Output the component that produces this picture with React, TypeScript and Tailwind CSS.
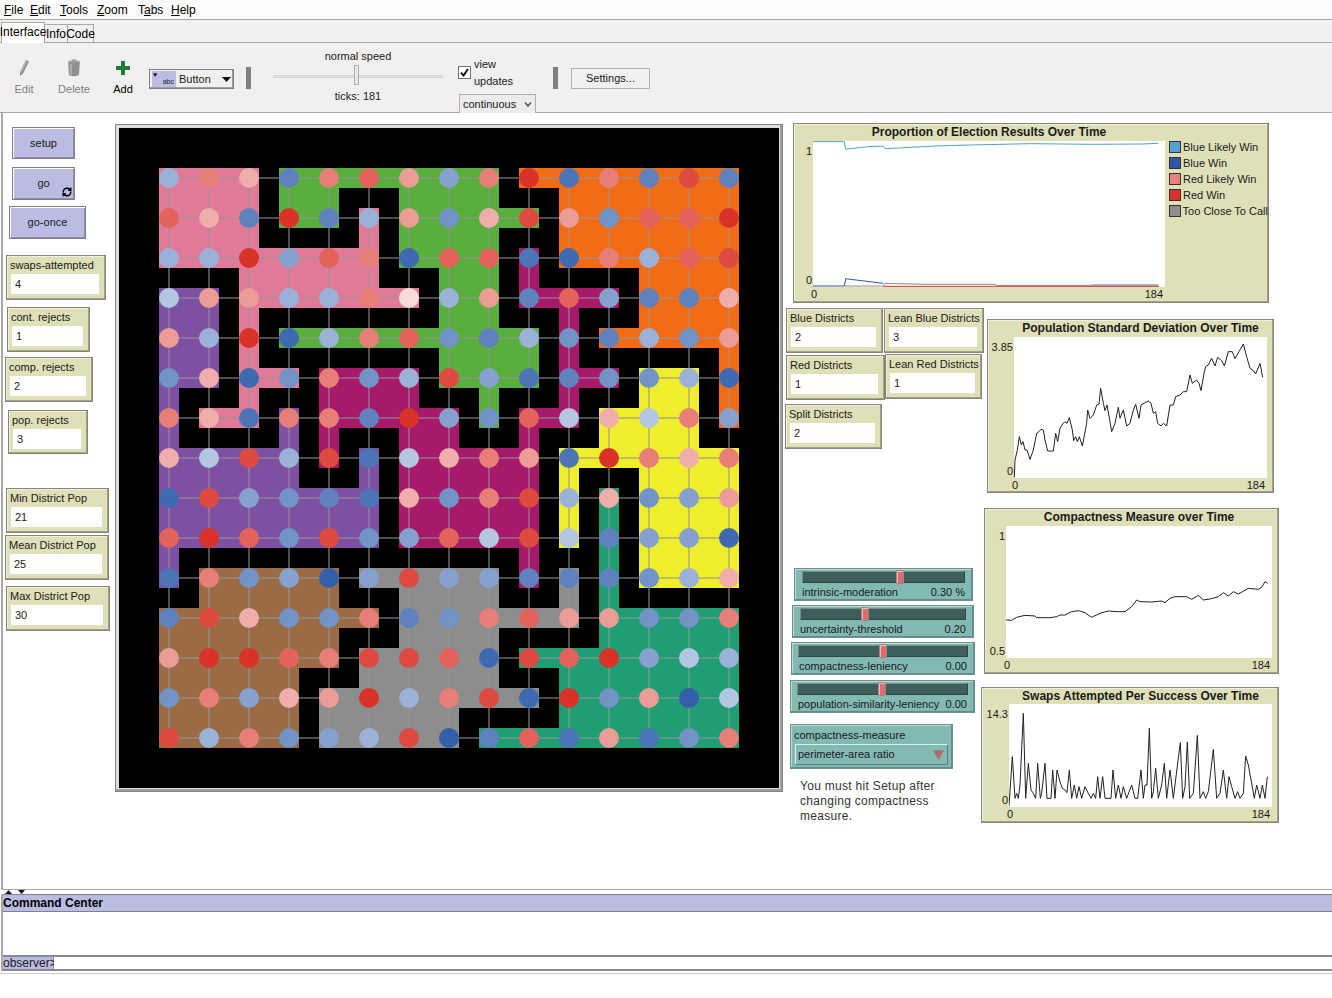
import React from 'react';
import { RefreshCw } from 'lucide-react';

// district of each node, row by row
const districts = [
  'PPPGGGGGGOOOOOO',
  'PPPGGPGGGGOOOOO',
  'PPPPPPGGGMOOOOO',
  'UUPPPPPGGMMMOOO',
  'UUPGGGGGGGMOOOO',
  'UUPPMMMGGGMMYYO',
  'UPPUMMMMGMMYYYO',
  'UUUUMUMMMMYYYYY',
  'UUUUUUMMMMYTYYY',
  'UUUUUUMMMMYTYYY',
  'UBBBBAAAAMATYYY',
  'BBBBBBAAAAATTTT',
  'BBBBBAAAATTTTTT',
  'BBBBAAAAAATTTTT',
  'BBBBAAAATTTTTTT',
];

// voter shade of each node: a-g red (dark to pale), 0-7 blue (dark to pale)
const voters = [
  '6df3dce5da2d3b3',
  'cf3a36e4fbe4cca',
  '66a5cd1cc21d6cb',
  '7ee66dg6e3c533f',
  'e6a16dc4364364e',
  '4f14d46b5234461',
  'df2dd3a54c7f7d5',
  'f7b6b27fde2adfd',
  '1b5432f4db6f45e',
  'cac4b45c7b73551',
  '2d4505b5533346f',
  '3bf44d34dcee44d',
  'eaacdbbc1bca576',
  '4d5fea6db1a4e07',
  'b6d456b03c2e24d',
];

const districtColors: Record<string, string> = {
  P: '#df7b98',
  G: '#59ae3d',
  O: '#f26b16',
  U: '#7d50a2',
  M: '#a61a69',
  Y: '#eeee2c',
  B: '#9a6b45',
  A: '#8d8d8d',
  T: '#1f9e75',
};

const voterColors: Record<string, string> = {
  a: '#d93329',
  b: '#de4a40',
  c: '#e3635c',
  d: '#e87e78',
  e: '#ec9c97',
  f: '#efaeab',
  g: '#f6dbd9',
  '0': '#345fab',
  '1': '#3f69b0',
  '2': '#4d74b6',
  '3': '#5f81bd',
  '4': '#7293c6',
  '5': '#86a1ce',
  '6': '#9bb1d7',
  '7': '#b4c6e2',
};

const popLine =
  '688,1072 690,1020 697,990 703,950 709,975 714,965 720,990 726,990 735,1018 745,990 755,940 762,935 768,928 775,930 780,960 788,993 805,993 812,940 818,965 825,925 833,912 840,905 846,910 853,893 862,930 866,962 872,950 877,965 883,950 892,978 905,910 908,870 915,895 925,885 935,855 942,852 947,805 955,850 960,872 966,855 975,905 980,935 990,910 1000,862 1005,895 1015,870 1025,918 1035,910 1045,870 1052,853 1062,895 1068,855 1080,848 1090,843 1098,850 1105,880 1112,875 1118,910 1128,918 1135,910 1145,918 1155,855 1165,855 1172,830 1185,825 1195,815 1205,815 1215,765 1222,790 1235,780 1242,790 1248,812 1258,755 1262,740 1270,735 1280,715 1290,738 1298,712 1310,722 1318,738 1330,695 1342,695 1350,716 1362,695 1375,672 1385,710 1395,745 1405,752 1412,762 1425,730 1433,772';

const compactLine =
  '663,360 680,361 695,352 720,346 750,348 755,353 795,353 815,350 825,345 840,345 860,335 880,332 900,338 920,352 945,340 970,333 1000,335 1020,335 1040,320 1055,300 1065,305 1100,306 1130,303 1140,308 1155,295 1170,290 1205,290 1220,298 1240,286 1255,300 1280,296 1300,290 1315,278 1330,288 1345,275 1360,282 1390,265 1420,268 1430,262 1440,245 1448,250';

const swapsLine =
  '672,918 682,770 690,895 695,880 700,895 705,855 715,640 722,895 730,790 738,870 745,880 752,895 758,790 766,895 770,880 780,790 786,895 798,895 803,810 810,895 816,810 825,845 832,865 840,870 846,878 853,810 860,895 868,855 875,895 882,860 890,895 900,860 910,880 918,895 925,880 932,895 938,830 945,895 953,830 960,895 978,895 984,810 992,895 1000,855 1008,895 1015,860 1025,895 1040,855 1050,895 1058,895 1068,810 1075,895 1080,855 1086,855 1093,685 1100,895 1105,875 1112,805 1120,895 1130,855 1138,790 1145,895 1155,810 1165,895 1178,790 1186,728 1193,895 1200,860 1207,726 1214,895 1225,880 1237,706 1245,895 1255,875 1262,895 1270,875 1285,748 1295,895 1305,880 1315,810 1325,895 1332,830 1340,860 1350,895 1358,875 1365,895 1375,880 1382,768 1390,795 1400,850 1408,895 1415,855 1425,895 1432,855 1440,895 1447,830';

const legend = [
  { label: 'Blue Likely Win', color: 'bg-[#52a2cf]' },
  { label: 'Blue Win', color: 'bg-[#2f57a6]' },
  { label: 'Red Likely Win', color: 'bg-[#e88080]' },
  { label: 'Red Win', color: 'bg-[#d9302a]' },
  { label: 'Too Close To Call', color: 'bg-[#8d8d8d]' },
];

const WorldMap = () => {
  const cells: React.ReactNode[] = [];
  const links: React.ReactNode[] = [];
  const dots: React.ReactNode[] = [];
  for (let j = 0; j < 15; j++) {
    for (let i = 0; i < 15; i++) {
      const d = districts[j][i];
      const fill = districtColors[d];
      const x = 40 + 40 * i;
      const y = 40 + 40 * j;
      const right = i < 14 && districts[j][i + 1] === d;
      const down = j < 14 && districts[j + 1][i] === d;
      const corner = right && down && districts[j + 1][i + 1] === d;
      cells.push(<rect key={`n${i}-${j}`} x={x} y={y} width={20} height={20} fill={fill} />);
      if (right) cells.push(<rect key={`r${i}-${j}`} x={x + 20} y={y} width={20} height={20} fill={fill} />);
      if (down) cells.push(<rect key={`d${i}-${j}`} x={x} y={y + 20} width={20} height={20} fill={fill} />);
      if (corner) cells.push(<rect key={`c${i}-${j}`} x={x + 20} y={y + 20} width={20} height={20} fill={fill} />);
      if (i < 14) links.push(<line key={`h${i}-${j}`} x1={x + 10} y1={y + 10} x2={x + 50} y2={y + 10} />);
      if (j < 14) links.push(<line key={`v${i}-${j}`} x1={x + 10} y1={y + 10} x2={x + 10} y2={y + 50} />);
      dots.push(<circle key={`p${i}-${j}`} cx={x + 10} cy={y + 10} r={10} fill={voterColors[voters[j][i]]} />);
    }
  }
  return (
    <svg width={660} height={660} viewBox="0 0 660 660" className="block bg-black">
      <g shapeRendering="crispEdges">{cells}</g>
      <g stroke="#939393" strokeOpacity={0.52} strokeWidth={2}>
        {links}
      </g>
      {dots}
    </svg>
  );
};

const Monitor = ({ label, value, className }: { label: string; value: string; className: string }) => (
  <div
    className={`absolute flex flex-col border border-[#85857a] bg-[#dfdfb8] pl-[4px] pr-[6px] shadow-[inset_-1px_-1px_0_#a3a38c,inset_1px_1px_0_#f0f0dc] ${className}`}
  >
    <div className="h-[18px] leading-[19px] whitespace-nowrap -ml-[1px]">{label}</div>
    <div className="h-[20px] bg-white pl-[4px] leading-[20px]">{value}</div>
  </div>
);

const NlButton = ({ label, className, forever }: { label: string; className: string; forever?: boolean }) => (
  <div
    className={`absolute flex items-center justify-center border border-[#7e7e86] bg-[#babce2] shadow-[inset_1px_1px_0_#ffffff,inset_-1px_-1px_0_#8e8fb0] ${className}`}
  >
    {label}
    {forever && (
      <RefreshCw size={10} strokeWidth={3.5} color="#000" className="absolute right-[2px] bottom-[2px]" />
    )}
  </div>
);

const Slider = ({
  label,
  value,
  className,
  knob,
  track,
}: {
  label: string;
  value: string;
  className: string;
  knob: string;
  track: string;
}) => (
  <div
    className={`absolute flex flex-col border border-[#6f8f8b] bg-[#82b9b2] shadow-[inset_-1px_-1px_0_#5f8f8a,inset_1px_1px_0_#b9dcd7] ${className}`}
  >
    <div className={`relative mt-[2px] h-[12px] border border-t-[#7a8f8c] border-l-[#7a8f8c] border-r-[#2c4744] border-b-[#2c4744] bg-[#3f5f5c] ${track}`}>
      <div className={`absolute -top-[2px] h-[14px] w-[8px] rounded-[1px] border border-[#a5807f] bg-[#d86f6f] shadow-[inset_1px_1px_0_#f4b9b8] ${knob}`} />
    </div>
    <div className="flex justify-between whitespace-nowrap leading-[16px] mt-[1px] pl-[7px] pr-[7px]">
      <span>{label}</span>
      <span>{value}</span>
    </div>
  </div>
);

const Plot = ({
  title,
  className,
  yMax,
  yMin,
  xPad,
  width,
  height,
  viewBox,
  children,
  side,
}: {
  title: string;
  className: string;
  yMax: string;
  yMin: string;
  xPad: string;
  width: number;
  height: number;
  viewBox: string;
  children: React.ReactNode;
  side?: React.ReactNode;
}) => (
  <div
    className={`absolute grid border border-[#85857a] bg-[#dfdfb8] shadow-[inset_-1px_-1px_0_#a3a38c,inset_1px_1px_0_#f0f0dc] ${className}`}
  >
    <div />
    <div className="text-center font-bold text-[12px] leading-[17px] whitespace-nowrap">{title}</div>
    <div />
    <div className="flex flex-col justify-between items-end pt-[3px] pr-[1px] leading-[14px]">
      <span>{yMax}</span>
      <span>{yMin}</span>
    </div>
    <svg width={width} height={height} viewBox={viewBox} className="block bg-white" fill="none">
      {children}
    </svg>
    <div>{side}</div>
    <div className={`col-span-3 flex justify-between leading-[15px] ${xPad}`}>
      <span>0</span>
      <span>184</span>
    </div>
  </div>
);

const Toolbtn = ({ label, muted, children, className }: { label: string; muted?: boolean; children: React.ReactNode; className: string }) => (
  <div className={`flex flex-col items-center ${className}`}>
    <div className="h-[20px] flex items-center justify-center">{children}</div>
    <div className={`mt-[3px] ${muted ? 'text-[#808080]' : 'text-black'}`}>{label}</div>
  </div>
);

export default function App() {
  return (
    <div className="relative flex h-[998px] w-[1332px] flex-col overflow-hidden bg-white font-['Liberation_Sans',sans-serif] text-[11px] text-[#1a1a1a]">
      {/* menu bar */}
      <div className="flex h-[20px] items-center border-b border-[#a8a8a8] bg-[#fbfbfb] pl-[4px] text-[12px] text-black">
        <span className="w-[26px]"><u>F</u>ile</span>
        <span className="w-[30px]"><u>E</u>dit</span>
        <span className="w-[37px]"><u>T</u>ools</span>
        <span className="w-[41px]"><u>Z</u>oom</span>
        <span className="w-[33px]">T<u>a</u>bs</span>
        <span><u>H</u>elp</span>
      </div>

      {/* tabs */}
      <div className="relative flex h-[23px] items-end border-b border-[#a8a8a8] bg-[#f0f0f0] pl-[1px] text-[12px] text-black">
        <div className="relative -mb-px flex h-[21px] w-[44px] items-center justify-center border border-b-0 border-[#a8a8a8] bg-white pb-[2px]">Interface</div>
        <div className="flex h-[18px] w-[23px] items-center justify-center border border-l-0 border-b-0 border-[#a8a8a8] bg-[#f0f0f0]">Info</div>
        <div className="flex h-[18px] w-[26px] items-center justify-center border border-l-0 border-b-0 border-[#a8a8a8] bg-[#f0f0f0]">Code</div>
      </div>

      {/* toolbar */}
      <div className="flex h-[70px] items-start border-b border-[#a8a8a8] bg-[#f0f0f0] pt-[15px]">
        <Toolbtn label="Edit" muted className="ml-[12px] w-[24px]">
          <svg width="12" height="18" viewBox="0 0 12 18">
            <path d="M8 1 L11 2.5 L5 14.5 L2 17 L2 13 Z" fill="#8c8c8c" />
            <path d="M8 1 L9.5 1.8 L3.5 14 L2 13 Z" fill="#b4b4b4" />
          </svg>
        </Toolbtn>
        <Toolbtn label="Delete" muted className="ml-[21px] w-[34px]">
          <svg width="14" height="18" viewBox="0 0 14 18">
            <rect x="5" y="0.5" width="4" height="2" fill="#8c8c8c" />
            <ellipse cx="7" cy="3" rx="6" ry="1.8" fill="#a0a0a0" />
            <path d="M1.2 3.5 H12.8 L12 16 Q7 18.5 2 16 Z" fill="#8f8f8f" />
            <path d="M3 5 H5 V16 H3.4 Z" fill="#b0b0b0" />
          </svg>
        </Toolbtn>
        <Toolbtn label="Add" className="ml-[15px] w-[34px]">
          <svg width="16" height="16" viewBox="0 0 16 16">
            <path d="M6 1 H10 V6 H15 V10 H10 V15 H6 V10 H1 V6 H6 Z" fill="#1f7a33" />
          </svg>
        </Toolbtn>

        <div className="ml-[9px] mt-[11px] flex h-[20px] w-[85px] items-center border border-[#808080] bg-[#f0f0f0] pl-[2px] shadow-[inset_-1px_-1px_0_#a0a0a0]">
          <div className="relative h-[16px] w-[24px] bg-[#babce2] text-[7px] leading-[22px] text-right pr-[2px]">
            <span className="absolute left-[1px] top-[-7px] text-[7px]">♥</span>abc
          </div>
          <span className="ml-[3px] text-[11px]">Button</span>
          <svg width="9" height="5" viewBox="0 0 9 5" className="ml-[11px]">
            <path d="M0 0 H9 L4.5 5 Z" fill="#111" />
          </svg>
        </div>
        <div className="ml-[12px] mt-[9px] h-[22px] w-[5px] bg-[#808080]" />

        <div className="ml-[22px] -mt-[9px] flex w-[170px] flex-col items-center">
          <div className="leading-[14px]">normal speed</div>
          <div className="relative mt-[2px] flex h-[22px] w-full items-center">
            <div className="h-[3px] w-full border border-[#d4d4d4] bg-[#e4e4e4]" />
            <div className="absolute left-[81px] top-0 h-[20px] w-[5px] border border-[#b0b0b0] bg-[#e8e8e8]" />
          </div>
          <div className="mt-[2px] leading-[14px]">ticks: 181</div>
        </div>

        <div className="ml-[15px] -mt-[2px] flex w-[80px] flex-col items-start">
          <div className="flex items-center">
            <div className="flex h-[13px] w-[13px] items-center justify-center border border-[#707070] bg-white">
              <svg width="9" height="9" viewBox="0 0 9 9">
                <path d="M1 4.5 L3.5 7.5 L8 1" fill="none" stroke="#000" strokeWidth="1.8" />
              </svg>
            </div>
            <span className="ml-[3px]">view updates</span>
          </div>
          <div className="ml-[1px] mt-[5px] flex h-[20px] w-[77px] items-center justify-between border border-[#b0b0b0] bg-[#ececec] px-[3px]">
            <span>continuous</span>
            <svg width="8" height="5" viewBox="0 0 8 5">
              <path d="M1 0.5 L4 4 L7 0.5" fill="none" stroke="#555" strokeWidth="1.5" />
            </svg>
          </div>
        </div>

        <div className="ml-[15px] mt-[9px] h-[22px] w-[5px] bg-[#808080]" />
        <div className="ml-[13px] mt-[10px] flex h-[21px] w-[79px] items-center justify-center border border-[#b0b0b0] bg-[#f0f0f0]">Settings...</div>
      </div>

      {/* interface canvas: widgets sit where the model author dropped them */}
      <div className="relative ml-px h-[777px] border-b border-l-2 border-[#a8a8a8] bg-white">
        <NlButton label="setup" className="left-[9px] top-[14px] h-[32px] w-[63px]" />
        <NlButton label="go" forever className="left-[9px] top-[54px] h-[33px] w-[63px]" />
        <NlButton label="go-once" className="left-[6px] top-[93px] h-[33px] w-[77px]" />

        <Monitor label="swaps-attempted" value="4" className="left-[3px] top-[142px] h-[45px] w-[100px]" />
        <Monitor label="cont. rejects" value="1" className="left-[4px] top-[194px] h-[45px] w-[83px]" />
        <Monitor label="comp. rejects" value="2" className="left-[2px] top-[244px] h-[45px] w-[88px]" />
        <Monitor label="pop. rejects" value="3" className="left-[5px] top-[297px] h-[44px] w-[80px]" />
        <Monitor label="Min District Pop" value="21" className="left-[3px] top-[375px] h-[45px] w-[103px]" />
        <Monitor label="Mean District Pop" value="25" className="left-[2px] top-[422px] h-[45px] w-[104px]" />
        <Monitor label="Max District Pop" value="30" className="left-[3px] top-[473px] h-[45px] w-[104px]" />

        <div className="absolute left-[112px] top-[11px] border border-[#858585] bg-[#dcdcdc] p-[3px] shadow-[inset_-2px_-2px_0_#a0a0a0]">
          <WorldMap />
        </div>

        <Plot
          title="Proportion of Election Results Over Time"
          className="left-[790px] top-[10px] h-[180px] w-[476px] grid-cols-[19px_352px_103px] grid-rows-[17px_146px_15px]"
          yMax="1"
          yMin="0"
          xPad="pl-[17px] pr-[105px]"
          width={352}
          height={146}
          viewBox="84 63 1056 438"
          side={
            <div className="flex flex-col gap-[4px] pl-[4px]">
              {legend.map((l) => (
                <div key={l.label} className="flex h-[12px] items-center whitespace-nowrap">
                  <div className={`h-[12px] w-[12px] border border-[#333] ${l.color}`} />
                  <span className="ml-[2px]">{l.label}</span>
                </div>
              ))}
            </div>
          }
        >
          <polyline points="84,65 178,65 182,88 205,85 250,80 295,78 300,86 340,84 450,78 550,75 740,71 920,73 1070,72 1120,70" stroke="#52a2cf" strokeWidth="3" />
          <polyline points="84,498 178,498 182,476 205,479 295,490" stroke="#2f57a6" strokeWidth="3" />
          <polyline points="178,498 295,498 300,490 420,493 630,493 635,496 920,496" stroke="#8d8d8d" strokeWidth="3" />
          <polyline points="920,495 1120,495" stroke="#4f6299" strokeWidth="3" />
          <polyline points="295,499 1122,499" stroke="#d9302a" strokeWidth="3" />
        </Plot>

        <Monitor label="Blue Districts" value="2" className="left-[783px] top-[195px] h-[45px] w-[97px]" />
        <Monitor label="Lean Blue Districts" value="3" className="left-[881px] top-[195px] h-[45px] w-[100px]" />
        <Monitor label="Red Districts" value="1" className="left-[783px] top-[242px] h-[45px] w-[99px]" />
        <Monitor label="Lean Red Districts" value="1" className="left-[882px] top-[241px] h-[45px] w-[97px]" />
        <Monitor label="Split Districts" value="2" className="left-[782px] top-[291px] h-[45px] w-[97px]" />

        <Plot
          title="Population Standard Deviation Over Time"
          className="left-[984px] top-[206px] h-[174px] w-[287px] grid-cols-[26px_253px_6px] grid-rows-[17px_141px_14px]"
          yMax="3.85"
          yMin="0"
          xPad="pl-[24px] pr-[8px]"
          width={253}
          height={141}
          viewBox="687 651 759 423"
        >
          <polyline points={popLine} stroke="#222" strokeWidth="3" />
        </Plot>

        <Plot
          title="Compactness Measure over Time"
          className="left-[981px] top-[395px] h-[166px] w-[295px] grid-cols-[21px_266px_6px] grid-rows-[17px_132px_15px]"
          yMax="1"
          yMin="0.5"
          xPad="pl-[19px] pr-[8px]"
          width={266}
          height={132}
          viewBox="663 78 798 396"
        >
          <polyline points={compactLine} stroke="#222" strokeWidth="3" />
        </Plot>

        <Plot
          title="Swaps Attempted Per Success Over Time"
          className="left-[978px] top-[574px] h-[136px] w-[298px] grid-cols-[27px_263px_6px] grid-rows-[16px_103px_15px]"
          yMax="14.3"
          yMin="0"
          xPad="pl-[25px] pr-[8px]"
          width={263}
          height={103}
          viewBox="672 612 789 309"
        >
          <polyline points={swapsLine} stroke="#222" strokeWidth="3" />
        </Plot>

        <Slider label="intrinsic-moderation" value="0.30 %" className="left-[791px] top-[455px] h-[33px] w-[179px]" track="mx-[7px]" knob="left-[93px]" />
        <Slider label="uncertainty-threshold" value="0.20" className="left-[789px] top-[492px] h-[33px] w-[182px]" track="mx-[7px]" knob="left-[60px]" />
        <Slider label="compactness-leniency" value="0.00" className="left-[788px] top-[529px] h-[33px] w-[184px]" track="mx-[6px]" knob="left-[80px]" />
        <Slider label="population-similarity-leniency" value="0.00" className="left-[787px] top-[567px] h-[33px] w-[185px]" track="mx-[6px]" knob="left-[80px]" />

        <div className="absolute left-[787px] top-[611px] h-[45px] w-[163px] border border-[#6f8f8b] bg-[#82b9b2] px-[4px] shadow-[inset_-1px_-1px_0_#5f8f8a,inset_1px_1px_0_#b9dcd7]">
          <div className="h-[19px] -ml-[1px] leading-[20px]">compactness-measure</div>
          <div className="flex h-[21px] items-center justify-between border border-t-[#dceeea] border-l-[#dceeea] border-r-[#56807b] border-b-[#56807b] pl-[2px] pr-[3px]">
            <span>perimeter-area ratio</span>
            <svg width="11" height="10" viewBox="0 0 11 10">
              <path d="M0.5 0.5 H10.5 L5.5 9.5 Z" fill="#c8605f" stroke="#7c8f88" strokeWidth="1" />
            </svg>
          </div>
        </div>

        <div className="absolute left-[797px] top-[666px] w-[150px] text-[12px] leading-[15px] tracking-[0.3px] text-[#333]">
          You must hit Setup after changing compactness measure.
        </div>
      </div>

      {/* splitter arrows */}
      <div className="flex h-[4px] items-center gap-[6px] overflow-hidden pl-[5px]">
        <svg width="7" height="4" viewBox="0 0 7 4"><path d="M0 4 L3.5 0 L7 4 Z" fill="#111" /></svg>
        <svg width="7" height="4" viewBox="0 0 7 4"><path d="M0 0 H7 L3.5 4 Z" fill="#111" /></svg>
      </div>

      {/* command center */}
      <div className="ml-px border-l-2 border-[#a8a8a8]">
        <div className="flex h-[18px] items-center border-y border-[#808090] bg-[#babce2] text-[12px] font-bold text-black">Command Center</div>
        <div className="h-[43px] bg-white" />
        <div className="flex h-[16px] items-stretch border-y-2 border-[#8a8a96]">
          <div className="w-[51px] border-r border-[#8a8a96] bg-[#babce2] text-[12px] leading-[13px]">observer&gt;</div>
          <div className="flex-1 bg-white" />
        </div>
      </div>
      <div className="h-[3px] border-b border-[#c8c8c8]" />
    </div>
  );
}
